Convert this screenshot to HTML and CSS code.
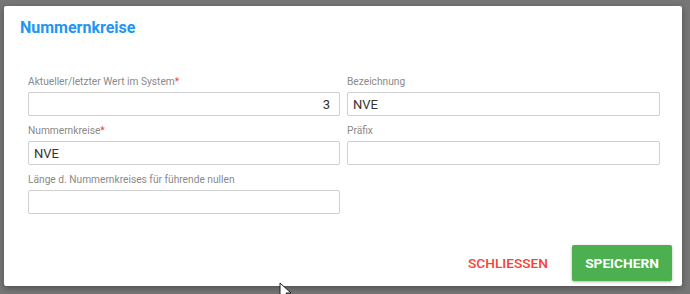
FILE: index.html
```html
<!DOCTYPE html>
<html>
<head>
    <meta charset="utf-8" />
    <title>Nummernkreise</title>
    <link rel="stylesheet" href="styles.css">
</head>
<body>
<div class="dialog">
    <h2 class="dialog-title">Nummernkreise</h2>
    <div class="form">
        <div class="field">
            <label>Aktueller/letzter Wert im System<span class="req">*</span></label>
            <input class="num" type="text" value="3" />
        </div>
        <div class="field">
            <label>Bezeichnung</label>
            <input type="text" value="NVE" />
        </div>
        <div class="field">
            <label>Nummernkreise<span class="req">*</span></label>
            <input type="text" value="NVE" />
        </div>
        <div class="field">
            <label>Präfix</label>
            <input type="text" value="" />
        </div>
        <div class="field">
            <label>Länge d. Nummernkreises für führende nullen</label>
            <input type="text" value="" />
        </div>
    </div>
    <div class="actions">
        <button class="btn-flat">SCHLIESSEN</button>
        <button class="btn-save">SPEICHERN</button>
    </div>
</div>
<!--mauszeiger-->
<svg class="cursor" width="14" height="20" viewBox="0 0 14 20">
    <path d="M1 1 L1 16 L5 12 L8 19 L10 18 L7 11 L12 11 Z" fill="#fff" stroke="#222" stroke-width="1"/>
</svg>
</body>
</html>
```
FILE: styles.css
```css
body {
    margin: 0;
    padding: 6px 0 0 4px;
    background: #767676;
    font-family: Roboto, "Liberation Sans", sans-serif;
    height: 294px;
    box-sizing: border-box;
    overflow: hidden;
    position: relative;
}
.dialog {
    width: 678px;
    height: 280px;
    background: #fff;
    border-radius: 2px;
    box-shadow: 0 2px 6px rgba(0,0,0,0.35);
    box-sizing: border-box;
    display: flex;
    flex-direction: column;
}
.dialog-title {
    margin: 0;
    padding: 12px 0 0 16px;
    font-size: 16px;
    line-height: 20px;
    font-weight: bold;
    color: #2196f3;
}
.form {
    margin-top: 37px;
    padding: 0 22px 0 24px;
    display: grid;
    grid-template-columns: 312px 313px;
    column-gap: 7px;
}
.field {
    margin-bottom: 8px;
}
.field label {
    display: block;
    font-size: 10.2px;
    line-height: 14px;
    color: #8a8a8a;
    margin-bottom: 3px;
}
.field .req {
    color: #f44336;
}
.field input {
    display: block;
    width: 100%;
    height: 24px;
    box-sizing: border-box;
    border: 1px solid #cfcfcf;
    border-radius: 2px;
    padding: 0 5px;
    font-family: Roboto, "Liberation Sans", sans-serif;
    font-size: 13px;
    color: #333;
    outline: none;
}
.field input.num {
    text-align: right;
    padding-right: 9px;
}
.actions {
    margin-top: auto;
    padding: 0 10px 5px 0;
    display: flex;
    justify-content: flex-end;
    align-items: center;
    gap: 16px;
}
.actions button {
    font-family: Roboto, "Liberation Sans", sans-serif;
    font-size: 13.7px;
    font-weight: 500;
    border: none;
    cursor: pointer;
}
.btn-flat {
    background: none;
    color: #f44336;
    padding: 0 8px;
    height: 36px;
}
.btn-save {
    width: 100px;
    height: 36px;
    background: #4caf50;
    color: #fff;
    font-weight: bold !important;
    border-radius: 2px;
    box-shadow: 0 1px 3px rgba(0,0,0,0.3);
}
.cursor {
    position: absolute;
    left: 279px;
    top: 282px;
}
```
